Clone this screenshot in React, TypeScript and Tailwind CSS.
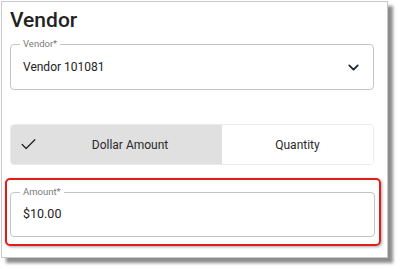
import { Check, ChevronDown } from "lucide-react";

function OutlinedField({ label, value, chevron }: { label: string; value: string; chevron?: boolean }) {
  return (
    <div className="relative flex h-full w-full items-center rounded-[4px] border border-[#c4c4c4] pl-[12px] pr-[11px]">
      <span className="absolute -top-[7px] left-[9px] bg-white px-[3px] text-[9.5px] leading-[12px] text-[#7a7a7a]">
        {label}
      </span>
      <span className={chevron ? "flex-1 text-[12px] text-[#222]" : "flex-1 text-[12.5px] text-[#222]"}>{value}</span>
      {chevron && <ChevronDown size={17} strokeWidth={2.5} className="text-[#1d2533]" />}
    </div>
  );
}

export default function App() {
  return (
    <div className="h-[269px] w-[400px] overflow-hidden bg-white pl-[1px] pt-[1px] font-['Roboto',sans-serif]">
      <div className="flex h-[257px] w-[387px] flex-col border border-[#c9c9c9] bg-white shadow-[5px_5px_3px_rgba(0,0,0,0.45)]">
        <div className="h-[42px] pl-[8px] pt-[5px]">
          <h1 className="text-[21px] font-medium leading-[26px] text-[#222]">Vendor</h1>
        </div>

        <div className="ml-[8px] h-[46px] w-[364px]">
          <OutlinedField label="Vendor*" value="Vendor 101081" chevron />
        </div>

        <div className="ml-[8px] mt-[34px] flex h-[41px] w-[364px] overflow-hidden rounded-[4px] border border-[#ebebeb] text-[12px] text-[#2a2a2a]">
          <div className="flex w-[211px] items-center bg-[#e0e0e0] pl-[8px]">
            <Check size={19} strokeWidth={1.6} className="text-[#222]" />
            <span className="flex-1 text-center">Dollar Amount</span>
          </div>
          <div className="flex flex-1 items-center justify-center bg-white">Quantity</div>
        </div>

        <div className="ml-[3px] mt-[13px] h-[68px] w-[376px] rounded-[5px] border-2 border-[#e21b1b] pl-[3px] pr-[4px] pt-[12px] shadow-[1px_1px_3px_rgba(0,0,0,0.35)]">
          <div className="h-[45px] w-full">
            <OutlinedField label="Amount*" value="$10.00" />
          </div>
        </div>
      </div>
    </div>
  );
}
